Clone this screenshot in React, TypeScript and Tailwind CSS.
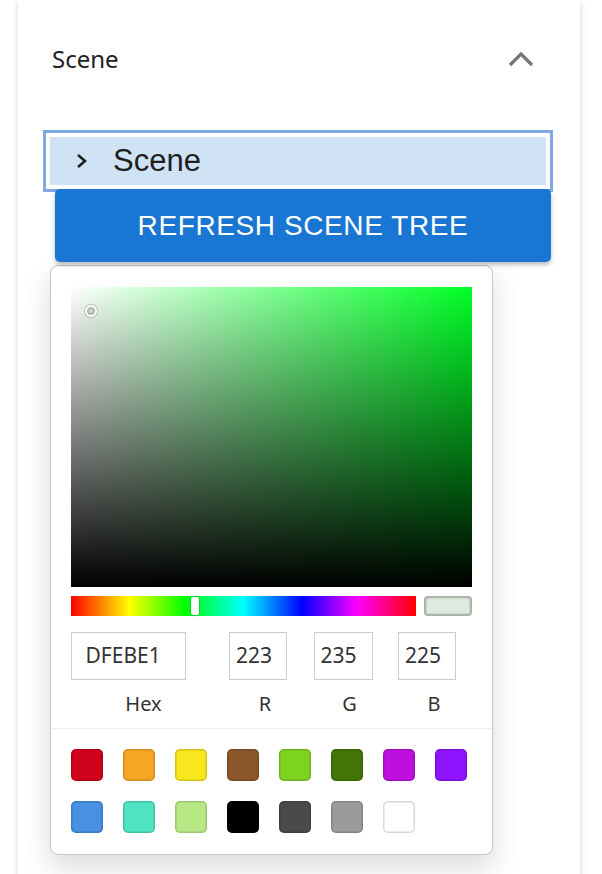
import React from 'react';

// Preset swatches shown under the picker
const presetColors = [
  '#D0021B', '#F5A623', '#F8E71C', '#8B572A', '#7ED321', '#417505', '#BD10E0', '#9013FE',
  '#4A90E2', '#50E3C2', '#B8E986', '#000000', '#4A4A4A', '#9B9B9B', '#FFFFFF',
];

const hue = 129;

const ChevronUp = () => (
  <svg width="26" height="16" viewBox="0 0 26 16" fill="none">
    <polyline points="2,14 13,3 24,14" stroke="#757575" strokeWidth="3.2" />
  </svg>
);

const ChevronRight = () => (
  <svg width="12" height="16" viewBox="0 0 12 16" fill="none">
    <polyline points="2,2 9,8 2,14" stroke="#1f1f1f" strokeWidth="2.6" />
  </svg>
);

const Field = ({ value, label, inputW, colW }: { value: string; label: string; inputW: string; colW: string }) => (
  <div className={`flex flex-col ${colW}`}>
    <div className={`h-[48px] ${inputW} border-[1.5px] border-[#cccccc] flex items-center px-[6px] text-[21px] text-[#333]`}>
      {value}
    </div>
    <div className="mt-[12px] text-center text-[20px] leading-[24px] text-[#333]">{label}</div>
  </div>
);

export default function App() {
  return (
    <div className="w-[602px] h-[874px] bg-white overflow-hidden" style={{ fontFamily: '"Noto Sans", sans-serif' }}>
      <div className="ml-[18px] w-[562px] h-[900px] bg-white shadow-[0_2px_6px_rgba(0,0,0,0.18)]">
        {/* Panel header */}
        <div className="h-[118px] flex items-center justify-between pl-[34px] pr-[46px]">
          <span className="text-[24px] text-[#222]">Scene</span>
          <ChevronUp />
        </div>

        {/* Scene tree node */}
        <div className="ml-[25px] w-[510px] mt-[12px] border-[3px] border-[#80a8e2] p-[4px] bg-white">
          <div className="h-[48px] bg-[#d0e3f5] flex items-center pl-[26px]" style={{ fontFamily: '"Liberation Sans", Arial, sans-serif' }}>
            <ChevronRight />
            <span className="ml-[25px] text-[31px] text-[#1f1f1f]">Scene</span>
          </div>
        </div>

        <button
          className="relative ml-[37px] mt-[-3px] w-[496px] h-[73px] rounded-[5px] bg-[#1976d2] text-white text-[28px] tracking-[0.6px] shadow-[0_3px_4px_rgba(0,0,0,0.25)]"
          style={{ fontFamily: '"Liberation Sans", Arial, sans-serif' }}
        >
          REFRESH SCENE TREE
        </button>

        {/* Color picker popover */}
        <div className="ml-[32px] mt-[3px] w-[443px] bg-white border-[1.5px] border-[#c6c6c6] rounded-[8px] shadow-[0_12px_28px_rgba(0,0,0,0.15)]">
          <div className="px-[19.5px] pt-[20.5px]">
            {/* Saturation / value area */}
            <div className="relative w-[401px] h-[300px]" style={{ background: `hsl(${hue}, 100%, 50%)` }}>
              <div className="absolute inset-0 bg-gradient-to-r from-white to-transparent" />
              <div className="absolute inset-0 bg-gradient-to-t from-black to-transparent" />
              <div className="absolute left-[14px] top-[18px] w-[12px] h-[12px] rounded-full border-[2px] border-white shadow-[0_0_0_1px_rgba(0,0,0,0.2),inset_0_0_2px_2px_rgba(0,0,0,0.25)]" />
            </div>

            {/* Hue slider + preview */}
            <div className="flex items-center gap-[8px] mt-[9px]">
              <div
                className="relative w-[345px] h-[20px]"
                style={{ background: 'linear-gradient(to right, #f00 0%, #ff0 17%, #0f0 33%, #0ff 50%, #00f 67%, #f0f 83%, #f00 100%)' }}
              >
                <div className="absolute left-[120px] top-[1px] w-[8px] h-[18px] rounded-[2px] bg-white shadow-[0_0_2px_rgba(0,0,0,0.6)]" />
              </div>
              <div className="w-[48px] h-[20px] rounded-[4px] bg-[#dfebe1] border-[2px] border-[#a9b5ab] shadow-[inset_0_0_3px_rgba(0,0,0,0.15)]" />
            </div>

            {/* Inputs */}
            <div className="flex mt-[16px] gap-[12.5px]">
              <Field value="DFEBE1" label="Hex" inputW="w-[115px] pl-[14px]" colW="w-[146px]" />
              <Field value="223" label="R" inputW="w-[58px]" colW="w-[72px]" />
              <Field value="235" label="G" inputW="w-[59px]" colW="w-[72px]" />
              <Field value="225" label="B" inputW="w-[58px]" colW="w-[72px]" />
            </div>
          </div>

          <div className="mt-[12px] h-[1px] bg-[#eeeeee]" />

          {/* Preset swatches */}
          <div className="grid grid-cols-8 gap-x-[20px] gap-y-[20px] px-[19.5px] pt-[20px] pb-[21px] w-fit">
            {presetColors.map((c) => (
              <div
                key={c}
                className="w-[32px] h-[32px] rounded-[5px] shadow-[inset_0_0_0_1.5px_rgba(0,0,0,0.15)]"
                style={{ background: c }}
              />
            ))}
          </div>
        </div>
      </div>
    </div>
  );
}
